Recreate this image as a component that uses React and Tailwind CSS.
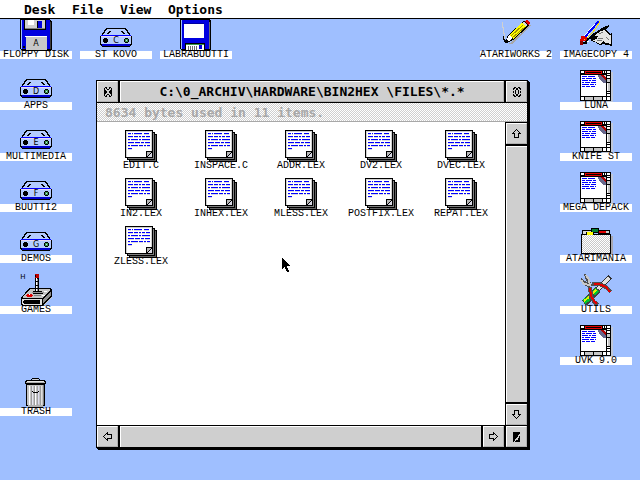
import { useState } from 'react';

const LETTER_FONT = '"DejaVu Sans", sans-serif';

// rects: [x, y, w, h, color]
function Rects({ items }) {
  return items.map(([x, y, w, h, c], i) => (
    <rect key={i} x={x} y={y} width={w} height={h} fill={c} />
  ));
}

// every # is one pixel
function Bitmap({ rows, color = '#000', className }) {
  const d = rows
    .map((row, y) => [...row].map((c, x) => (c === '#' ? `M${x} ${y}h1v1h-1z` : '')).join(''))
    .join('');
  return (
    <svg width={rows[0].length} height={rows.length} shapeRendering="crispEdges" className={className} aria-hidden="true">
      <path d={d} fill={color} />
    </svg>
  );
}

function Icon({ children }) {
  return (
    <svg width="32" height="32" viewBox="0 0 32 32" shapeRendering="crispEdges" className="block overflow-visible" aria-hidden="true">
      {children}
    </svg>
  );
}

function DriveIcon({ letter }) {
  return (
    <Icon>
      <path d="M6 9h20v1h1v1h1v2h1v1h1v2h1v1h1v9h-1v1h-1v1H2v-1H1v-1H0v-9h1v-1h1v-2h1v-1h1v-2h1v-1h1z" fill="#000" />
      <path d="M7 10h18v1h1v1h1v2h1v1h1v2H3v-2h1v-1h1v-2h1v-1h1z" fill="#b4ccff" />
      <Rects
        items={[
          [1, 16, 30, 1, '#0000ff'],
          [1, 17, 30, 8, '#b4ccff'],
          [1, 17, 30, 1, '#e8d8f0'],
          [2, 25, 28, 2, '#0000d0'],
          [9, 12, 2, 1, '#000'], [8, 13, 2, 1, '#000'], [7, 14, 2, 1, '#000'],
          [21, 12, 2, 1, '#000'], [22, 13, 2, 1, '#000'], [23, 14, 2, 1, '#000'],
          [4, 19, 3, 5, '#000'], [3, 20, 5, 3, '#000'],
          [25, 19, 3, 5, '#000'], [24, 20, 5, 3, '#000'],
          [25, 20, 3, 3, '#3c9a4c'], [26, 21, 1, 1, '#c4d6ff'],
        ]}
      />
      <text x="16" y="24" textAnchor="middle" fontSize="8" fontFamily={LETTER_FONT}>{letter}</text>
    </Icon>
  );
}

function FloppyIcon() {
  return (
    <Icon>
      <path d="M0 0h30v1h1v1h1v29h-1v1H2v-1H1v-1H0z" fill="#000" />
      <Rects
        items={[
          [1, 1, 29, 29, '#0000e0'],
          [1, 1, 1, 29, '#9fbfff'],
          [30, 3, 1, 27, '#3c3c3c'],
          [4, 0, 22, 11, '#000'],
          [5, 1, 20, 9, '#d0d0d0'],
          [8, 1, 6, 5, '#fff'],
          [18, 2, 4, 7, '#0000e0'],
          [17, 2, 1, 7, '#000'],
          [5, 9, 20, 1, '#808080'],
          [6, 18, 21, 13, '#c8c8c8'],
          [5, 17, 22, 1, '#fff'],
          [3, 27, 2, 2, '#000'],
        ]}
      />
      <text x="16" y="27" textAnchor="middle" fontSize="8" fontFamily={LETTER_FONT}>A</text>
    </Icon>
  );
}

function DiskIcon() {
  return (
    <Icon>
      <path d="M0 0h30v1h1v30h-1v1H2v-1H1v-1H0z" fill="#000" />
      <Rects
        items={[
          [1, 1, 28, 29, '#0000e0'],
          [1, 1, 1, 29, '#9fbfff'],
          [29, 3, 1, 27, '#707070'],
          [4, 5, 20, 14, '#fff'],
          [3, 4, 21, 1, '#0000a0'],
          [5, 24, 20, 7, '#000'],
          [6, 25, 18, 1, '#3c9a4c'],
          [6, 26, 18, 5, '#fff'],
          [8, 27, 1, 4, '#707070'], [10, 27, 1, 4, '#707070'], [12, 27, 1, 4, '#707070'],
          [14, 27, 1, 4, '#707070'], [16, 27, 1, 4, '#707070'], [19, 26, 3, 4, '#0000e0'],
        ]}
      />
    </Icon>
  );
}

function JoystickIcon() {
  return (
    <Icon>
      <path d="M3 32h20l9-9v-6l-8 8z" fill="#c8c8c8" />
      <path d="M1 24l8-10h21l2 2v6l-9 9-1 1H2l-1-1z" fill="#000" />
      <path d="M3 23l7-8h19l1 1-8 8H3z" fill="#c4c4c4" />
      <path d="M23 25l8-8v4l-8 8z" fill="#8c8c8c" />
      <path d="M2 25h20v6H3l-1-1z" fill="#e0e0e0" />
      <path d="M4 26h15l1 1v3H4l-1-1v-2z" fill="#000" />
      <Rects
        items={[
          [7, 20, 5, 3, '#e00000'], [6, 21, 7, 1, '#e00000'], [9, 20, 1, 1, '#fff'],
          [13, 17, 9, 1, '#000'], [12, 18, 12, 1, '#909090'], [13, 19, 10, 1, '#000'], [14, 21, 7, 1, '#808080'],
          [24, 17, 3, 1, '#fff'], [22, 21, 3, 1, '#fff'],
          [15, 1, 4, 17, '#000'], [16, 4, 1, 13, '#fff'], [17, 5, 1, 12, '#909090'],
          [15, 0, 4, 4, '#c00000'], [15, 1, 1, 2, '#000'], [16, 7, 2, 1, '#000'], [16, 11, 2, 1, '#000'], [16, 14, 2, 1, '#000'],
        ]}
      />
      <text x="3" y="5" textAnchor="middle" fontSize="7" fontFamily={LETTER_FONT}>H</text>
    </Icon>
  );
}

function TrashIcon() {
  return (
    <Icon>
      <Rects
        items={[
          [12, 2, 7, 1, '#000'], [11, 3, 1, 1, '#000'], [19, 3, 1, 1, '#000'], [13, 3, 5, 1, '#d0d0d0'],
          [6, 4, 19, 5, '#000'], [5, 5, 21, 3, '#000'],
          [7, 5, 17, 1, '#e8e8e8'], [6, 6, 19, 1, '#b0b0b0'],
          [6, 9, 19, 21, '#000'], [8, 29, 15, 3, '#000'],
          [7, 9, 17, 20, '#c4c4c4'], [8, 29, 15, 2, '#b0b0b0'],
          [9, 10, 1, 19, '#fff'], [11, 10, 1, 19, '#9c9c9c'], [12, 10, 1, 19, '#e4e4f0'],
          [14, 10, 1, 19, '#9c9c9c'], [15, 10, 1, 19, '#fff'], [17, 10, 1, 19, '#a4a4a4'],
          [18, 10, 1, 18, '#dcdcf0'], [20, 10, 1, 19, '#9c9c9c'], [21, 10, 1, 19, '#e0e0e0'], [23, 9, 1, 20, '#808080'],
          [12, 15, 1, 1, '#000'], [13, 16, 5, 1, '#000'], [18, 15, 1, 1, '#000'],
        ]}
      />
    </Icon>
  );
}

function PencilIcon() {
  return (
    <Icon>
      <path d="M2 3h1v5h1v6h1v7h-1v-6h-1v-6H2z" fill="#d0d0d0" />
      <path d="M10 24L30 6l1 1L12 25H7z" fill="#a8a8a8" />
      <path d="M3 17h1v3l2 2 2-6L24 2l3-1 3 3-1 3L13 21l-6 3H5l-2-4z" fill="#000" />
      <path d="M9 16L22 4l4 4L13 20z" fill="#ffff00" />
      <path d="M11 17L23 6M12 19L25 8" stroke="#a09000" strokeWidth="1" />
      <path d="M7 21l1-4 1-1 3 3-1 2-3 1z" fill="#fff" />
      <path d="M22 4l2-1 3 3-1 2z" fill="#d8d8d8" />
      <path d="M25 2l2-1 3 3-2 2z" fill="#e00000" />
    </Icon>
  );
}

function HandIcon() {
  return (
    <Icon>
      <path d="M19 1l-3 3-4 3-4 5-4 5-2 4 4-1 4-6 4-5 3-5z" fill="#fff" />
      <path d="M19 2L4 19" stroke="#0000ff" strokeWidth="2" />
      <path d="M20 2l-4 7-4 5-5 5" stroke="#ffe000" fill="none" />
      <path d="M13 17l5-6 8-1 4 5 2-1v13l-5-1-4-1-3 1-5-3-4-1v-3z" fill="#000" />
      <path d="M15 16l4-4 6-1 4 5h2v9l-5-1-3-2-3 3-4-2-3-1v-1l4-1 1-3h-3z" fill="#e4e4e4" />
      <path d="M19 15l4-2M18 19h5M17 22l5-1M26 18l3 3" stroke="#777" />
      <path d="M29 7l-8 4-8 5-8 7" stroke="#000" strokeWidth="2" fill="none" />
      <path d="M27 8l-6 3" stroke="#000" strokeWidth="3" />
      <Rects
        items={[
          [1, 17, 4, 3, '#e00000'], [0, 20, 6, 2, '#e00000'], [0, 22, 3, 4, '#900000'],
          [5, 18, 2, 3, '#e00000'], [3, 23, 4, 2, '#000'], [7, 22, 2, 1, '#fff'], [4, 20, 1, 1, '#ffe000'],
        ]}
      />
    </Icon>
  );
}

function ProgramIcon() {
  return (
    <Icon>
      <Rects
        items={[
          [2, 30, 31, 2, '#c0c8d8'], [31, 2, 2, 30, '#c0c8d8'],
          [0, 0, 31, 31, '#000'],
          [1, 1, 3, 2, '#fff'], [5, 1, 17, 3, '#e00000'], [6, 2, 15, 1, '#000'],
          [1, 5, 25, 21, '#fff'],
          [23, 1, 1, 2, '#fff'], [25, 1, 1, 2, '#fff'], [27, 1, 3, 2, '#fff'],
          [27, 4, 3, 1, '#fff'], [27, 6, 3, 2, '#fff'], [27, 9, 3, 3, '#c8c8c8'],
          [27, 13, 3, 8, '#c8c8c8'], [27, 13, 1, 8, '#fff'], [27, 22, 3, 1, '#fff'], [27, 24, 3, 2, '#fff'],
          [1, 27, 3, 3, '#fff'], [5, 27, 8, 3, '#c8c8c8'], [14, 27, 8, 3, '#c8c8c8'],
          [23, 27, 3, 3, '#fff'], [27, 27, 3, 3, '#fff'],
          [2, 6, 5, 1, '#0000ff'], [8, 6, 7, 1, '#0000ff'],
          [2, 8, 3, 1, '#0000ff'], [6, 8, 6, 1, '#0000ff'], [13, 8, 3, 1, '#0000ff'],
          [2, 10, 6, 1, '#0000ff'], [9, 10, 2, 1, '#0000ff'], [12, 10, 4, 1, '#0000ff'],
          [2, 12, 2, 1, '#0000ff'], [5, 12, 5, 1, '#0000ff'], [11, 12, 5, 1, '#0000ff'],
          [2, 14, 7, 1, '#0000ff'], [10, 14, 4, 1, '#0000ff'], [15, 14, 1, 1, '#0000ff'],
          [2, 16, 3, 1, '#0000ff'], [6, 16, 4, 1, '#0000ff'], [11, 16, 4, 1, '#0000ff'],
        ]}
      />
      <path d="M18 5h8v8h-2l-3-2-2-3z" fill="#68688c" />
      <path d="M21 5h5v5l-3-2z" fill="#b00000" />
      <path d="M24 5h2v2h-1z" fill="#d0d0d0" />
    </Icon>
  );
}

function FolderIcon() {
  return (
    <Icon>
      <defs>
        <pattern id="dither" width="2" height="2" patternUnits="userSpaceOnUse">
          <rect width="2" height="2" fill="#fff" />
          <rect width="1" height="1" fill="#c8c8c8" />
          <rect x="1" y="1" width="1" height="1" fill="#c8c8c8" />
        </pattern>
      </defs>
      <Rects
        items={[
          [3, 13, 30, 19, '#a8a8b0'],
          [11, 5, 8, 5, '#000'], [12, 6, 6, 3, '#008030'],
          [2, 7, 10, 5, '#000'], [3, 8, 8, 3, '#d8d8d8'],
          [18, 7, 12, 5, '#000'], [19, 8, 7, 2, '#e00000'], [26, 8, 3, 2, '#d0d0d0'],
          [6, 9, 8, 4, '#000'], [7, 9, 6, 3, '#ffff00'],
          [1, 11, 30, 20, '#000'], [7, 10, 6, 2, '#ffff00'],
          [2, 12, 28, 18, 'url(#dither)'],
        ]}
      />
    </Icon>
  );
}

function ToolsIcon() {
  return (
    <Icon>
      <path d="M30 3L17 16" stroke="#303030" strokeWidth="5" />
      <path d="M29 4L17 16" stroke="#e0e0e0" strokeWidth="3" />
      <path d="M18 15l-6 7-8 7" stroke="#404040" strokeWidth="7" fill="none" />
      <path d="M17 16l-4 4M9 24l-5 4" stroke="#00c030" strokeWidth="5" />
      <path d="M16 16l-4 4M9 23l-5 4" stroke="#e8f000" strokeWidth="2" />
      <path d="M12 10h7l7 3 5 5" stroke="#505050" strokeWidth="4" fill="none" />
      <path d="M10 13l1 9 3 6 4 3" stroke="#505050" strokeWidth="4" fill="none" />
      <path d="M1 4l2 6 5 3 4-1-1-4-3-2-1-5-3-1 1 4 2 4-3-1z" fill="#505050" />
      <path d="M1 6l3 4 6 1M6 1l3 5 1 6" stroke="#c8c8c8" strokeWidth="2" fill="none" />
      <path d="M14 10h5l7 3 4 5" stroke="#e00000" strokeWidth="2" fill="none" />
      <path d="M10 14l1 8 3 5 3 3" stroke="#e00000" strokeWidth="2" fill="none" />
    </Icon>
  );
}

function DocumentIcon() {
  const lines = [
    [3, 3, 3], [7, 3, 1], [9, 3, 8], [19, 3, 5],
    [3, 6, 5], [9, 6, 4], [14, 6, 2], [17, 6, 3], [21, 6, 4],
    [3, 9, 2], [6, 9, 7], [14, 9, 2], [17, 9, 8],
    [3, 12, 6], [10, 12, 5], [16, 12, 3], [20, 12, 5],
    [3, 15, 2], [6, 15, 7], [14, 15, 4], [19, 15, 2], [22, 15, 3],
    [3, 18, 4],
  ];
  return (
    <Icon>
      <Rects
        items={[
          [4, 4, 28, 28, '#000'], [5, 5, 26, 26, '#606060'],
          [2, 2, 28, 28, '#000'], [3, 3, 26, 26, '#808080'],
          [0, 0, 28, 28, '#000'], [1, 1, 26, 26, '#fff'],
          [1, 1, 26, 1, '#d0d0d0'], [1, 1, 1, 26, '#d0d0d0'], [26, 1, 1, 20, '#d0d0d0'],
        ]}
      />
      <Rects items={lines.map(([x, y, w]) => [x, y + 1, w, 1, '#dcdcdc'])} />
      <Rects items={lines.map(([x, y, w]) => [x, y, w, 1, '#0000ff'])} />
      <Rects
        items={[
          [21, 21, 6, 1, '#000'], [21, 21, 1, 6, '#000'],
          [22, 22, 5, 5, '#d8d8e4'],
          [22, 22, 4, 1, '#b8b8b8'], [22, 23, 3, 1, '#b8b8b8'], [22, 24, 2, 1, '#b8b8b8'], [22, 25, 1, 1, '#b8b8b8'],
          [26, 22, 1, 1, '#000'], [25, 23, 1, 1, '#000'], [24, 24, 1, 1, '#000'], [23, 25, 1, 1, '#000'], [22, 26, 1, 1, '#000'],
        ]}
      />
    </Icon>
  );
}

const ARROW_UP = [
  '....#....',
  '...#.#...',
  '..#...#..',
  '.#.....#.',
  '###...###',
  '..#...#..',
  '..#...#..',
  '..#...#..',
  '..#####..',
];
const ARROW_DOWN = [...ARROW_UP].reverse();
const ARROW_LEFT = ARROW_UP.map((_, y) => ARROW_UP.map((row) => row[y]).join(''));
const ARROW_RIGHT = ARROW_LEFT.map((row) => [...row].reverse().join(''));

const CLOSE = ['.##..##.', '#.#..#.#', '#..##..#', '##....##', '###..###', '###..###', '##....##', '#..##..#', '#.#..#.#', '.##..##.'];
const FULL = ['.##..##.', '##.##.##', '#..##..#', '..#..#..', '#.#..#.#', '#.#..#.#', '..#..#..', '#..##..#', '##.##.##', '.##..##.'];
const SIZER = ['#######', '#######', '######.', '#####..', '#####.#', '####..#', '###..##', '##...##', '##.####', '#.#####'];
const POINTER = [
  '#........',
  '##.......',
  '###......',
  '####.....',
  '#####....',
  '######...',
  '#######..',
  '########.',
  '#####....',
  '##.##....',
  '#..###...',
  '....##...',
  '....###..',
  '.....##..',
];

const MENUS = ['Desk', 'File', 'View', 'Options'];

const LEFT_ICONS = [
  { name: 'FLOPPY DISK', icon: <FloppyIcon />, place: 'col-start-1 row-start-1' },
  { name: 'ST KOVO', icon: <DriveIcon letter="C" />, place: 'col-start-2 row-start-1' },
  { name: 'LABRABUUTTI', icon: <DiskIcon />, place: 'col-start-3 row-start-1' },
  { name: 'APPS', icon: <DriveIcon letter="D" />, place: 'col-start-1 row-start-2' },
  { name: 'MULTIMEDIA', icon: <DriveIcon letter="E" />, place: 'col-start-1 row-start-3' },
  { name: 'BUUTTI2', icon: <DriveIcon letter="F" />, place: 'col-start-1 row-start-4' },
  { name: 'DEMOS', icon: <DriveIcon letter="G" />, place: 'col-start-1 row-start-5' },
  { name: 'GAMES', icon: <JoystickIcon />, place: 'col-start-1 row-start-6' },
  { name: 'TRASH', icon: <TrashIcon />, place: 'col-start-1 row-start-8' },
];

const RIGHT_ICONS = [
  { name: 'ATARIWORKS 2', icon: <PencilIcon />, place: 'col-start-1 row-start-1' },
  { name: 'IMAGECOPY 4', icon: <HandIcon />, place: 'col-start-2 row-start-1' },
  { name: 'LUNA', icon: <ProgramIcon />, place: 'col-start-2 row-start-2' },
  { name: 'KNIFE ST', icon: <ProgramIcon />, place: 'col-start-2 row-start-3' },
  { name: 'MEGA DEPACK', icon: <ProgramIcon />, place: 'col-start-2 row-start-4' },
  { name: 'ATARIMANIA', icon: <FolderIcon />, place: 'col-start-2 row-start-5' },
  { name: 'UTILS', icon: <ToolsIcon />, place: 'col-start-2 row-start-6' },
  { name: 'UVK 9.0', icon: <ProgramIcon />, place: 'col-start-2 row-start-7' },
];

const FILES = [
  'EDIT.C', 'INSPACE.C', 'ADDR.LEX', 'DV2.LEX', 'DVEC.LEX',
  'IN2.LEX', 'INHEX.LEX', 'MLESS.LEX', 'POSTFIX.LEX', 'REPAT.LEX',
  'ZLESS.LEX',
];

function DesktopIcon({ item }) {
  return (
    <button className={`flex w-[72px] flex-col items-center self-start ${item.place}`}>
      {item.icon}
      <span className="h-2 w-full bg-white text-[10px] leading-[8px] whitespace-nowrap">{item.name}</span>
    </button>
  );
}

function Gadget({ label, rows, className = '' }) {
  return (
    <button
      aria-label={label}
      className={`flex h-[21px] w-[21px] shrink-0 items-center justify-center border border-t-white border-l-white border-r-[#b0b0b0] border-b-[#b0b0b0] bg-[#cfcfcf] ${className}`}
    >
      <Bitmap rows={rows} />
    </button>
  );
}

function FileWindow() {
  const [selected, setSelected] = useState(null);

  return (
    <section className="absolute top-[61px] right-28 bottom-8 left-24 flex flex-col border border-black bg-black shadow-[1px_1px_0_#000,2px_2px_0_#000]">
      <header className="flex gap-0.5">
        <Gadget label="Close" rows={CLOSE} />
        <h1 className="h-[21px] min-w-0 flex-1 overflow-hidden border border-t-white border-l-white border-r-[#b0b0b0] border-b-[#b0b0b0] bg-[#cfcfcf] text-center font-['DejaVu_Sans_Mono',monospace] text-[13px] leading-[19px] font-bold whitespace-pre">
          {'C:\\0_ARCHIV\\HARDWARE\\BIN2HEX \\FILES\\*.*'}
        </h1>
        <Gadget label="Full size" rows={FULL} />
      </header>
      <p className="mt-px h-[19px] border-b border-[#a8a8a8] bg-[repeating-conic-gradient(#cfcfcf_0_25%,#ffffff_0_50%)] bg-[length:2px_2px] pl-2 font-['DejaVu_Sans_Mono',monospace] text-[13px] leading-[20px] font-bold text-[#a8a8a8]">
        8634 bytes used in 11 items.
      </p>
      <div className="flex min-h-0 flex-1">
        <div className="grid flex-1 auto-rows-[48px] grid-cols-[repeat(auto-fill,80px)] content-start overflow-hidden bg-white px-1 pt-2">
          {FILES.map((name) => (
            <button
              key={name}
              onClick={() => setSelected(name)}
              aria-pressed={selected === name}
              className="flex flex-col items-center self-start"
            >
              <DocumentIcon />
              <span className="text-[10px] leading-[8px]">{name}</span>
            </button>
          ))}
        </div>
        <div className="ml-px flex flex-col gap-0.5 pt-px">
          <Gadget label="Scroll up" rows={ARROW_UP} />
          <div className="w-[21px] flex-1 border-t border-l border-white bg-[#cfcfcf]" />
          <Gadget label="Scroll down" rows={ARROW_DOWN} />
        </div>
      </div>
      <footer className="mt-px flex gap-0.5">
        <Gadget label="Scroll left" rows={ARROW_LEFT} />
        <div className="flex-1 border-t border-l border-white bg-[#cfcfcf]" />
        <Gadget label="Scroll right" rows={ARROW_RIGHT} />
        <Gadget label="Resize" rows={SIZER} />
      </footer>
    </section>
  );
}

export default function App() {
  return (
    <div className="flex min-h-screen flex-col bg-[#9fbfff] font-['Liberation_Mono',monospace] text-black">
      <nav className="flex h-[19px] border-b border-black bg-white pl-6 font-['DejaVu_Sans_Mono',monospace] text-[13px] leading-[20px] font-bold">
        {MENUS.map((menu) => (
          <button key={menu} className="min-w-12 text-left">{menu}</button>
        ))}
      </nav>
      <main className="relative flex flex-1 justify-between">
        <div className="grid auto-rows-[51px] grid-cols-[repeat(3,80px)] content-start">
          {LEFT_ICONS.map((item) => <DesktopIcon key={item.name} item={item} />)}
        </div>
        <div className="grid auto-rows-[51px] grid-cols-[repeat(2,80px)] content-start">
          {RIGHT_ICONS.map((item) => <DesktopIcon key={item.name} item={item} />)}
        </div>
        <FileWindow />
        <Bitmap rows={POINTER} className="pointer-events-none absolute top-[239px] left-[282px]" />
      </main>
    </div>
  );
}
